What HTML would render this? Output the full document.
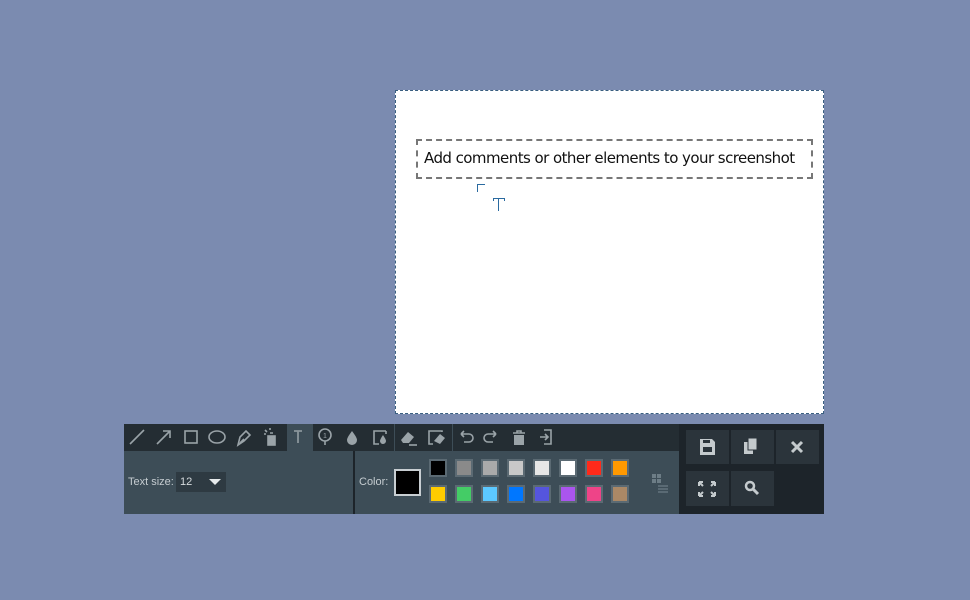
<!DOCTYPE html>
<html><head><style>
body{margin:0;width:970px;height:600px;background:#7b8bb0;position:relative;overflow:hidden;font-family:"Liberation Sans",sans-serif}
.a{position:absolute}
.canvas{left:395px;top:90px;width:427px;height:322px;background:#fff;border:1px dashed #3a5f80}
.tb{left:416px;top:139px;width:387px;height:36px;border:2px dashed #777;font-family:"DejaVu Sans","Liberation Sans",sans-serif;font-size:15px;color:#111;line-height:34px;padding-left:6px;letter-spacing:-0.55px;white-space:nowrap}
.top{left:124px;top:424px;width:555px;height:27px;background:#242d33}
.bot{left:124px;top:451px;width:555px;height:63px;background:#3d4d57}
.right{left:679px;top:424px;width:145px;height:90px;background:#1d242a}
.btn{position:absolute;width:43px;height:34px;background:#2b343b}
.sw{position:absolute;width:14px;height:14px;border:2px solid #5b6a73}
svg{position:absolute}
.lbl{color:#c5ccd0;font-size:11px}
</style></head><body>
<div class="a canvas"></div>
<div class="a tb">Add comments or other elements to your screenshot</div>
<div class="a" style="left:477px;top:184px;width:7px;height:7px;border-left:1px solid #2a6aa0;border-top:1px solid #2a6aa0"></div>
<div class="a" style="left:493px;top:198px;width:12px;height:1px;background:#2a6aa0"></div>
<div class="a" style="left:498px;top:198px;width:1px;height:13px;background:#2a6aa0"></div>
<div class="a" style="left:493px;top:198px;width:1px;height:3px;background:#2a6aa0"></div>
<div class="a" style="left:504px;top:198px;width:1px;height:3px;background:#2a6aa0"></div>

<div class="a top"></div>
<div class="a" style="left:287px;top:424px;width:26px;height:27px;background:#3d4d57"></div>
<div class="a" style="left:394px;top:424px;width:1px;height:27px;background:#3d4d57"></div>
<div class="a" style="left:452px;top:424px;width:1px;height:27px;background:#3d4d57"></div>
<svg class="a" style="left:124px;top:424px" width="440" height="27" fill="none" stroke="#9aa3a8" stroke-width="1.6">
<line x1="6" y1="20" x2="20" y2="6"/>
<line x1="33" y1="20" x2="46" y2="7"/><path d="M39 7h7v7"/>
<rect x="61" y="7" width="12" height="12"/>
<ellipse cx="93" cy="13" rx="8" ry="6"/>
<path d="M114 21l2-8 6-6 4 4-6 6z M116 19l4-4"/>
<rect x="144" y="12" width="7" height="9" fill="#9aa3a8"/><path d="M146 9h3 M141 6l2 2 M146 4v2 M140 10h2"/>
<path d="M170 7h8 M174 7v12" stroke="#8a959b" stroke-width="1.8"/>
<circle cx="201" cy="11" r="6"/><path d="M201 17v4"/><text x="199" y="14" font-size="7" fill="#9aa3a8" stroke="none">1</text>
<path d="M228 7c-3 4-5 7-5 9a5 5 0 0 0 10 0c0-2-2-5-5-9z" fill="#9aa3a8" stroke="none"/>
<path d="M262 7h-12v13h5 M262 7v3"/><path d="M259 11c-2 3-3 5-3 6a3 3 0 0 0 6 0c0-1-1-3-3-6z" fill="#9aa3a8" stroke="none"/>
<path d="M277 16l7-8 6 5-5 6h-6z" fill="#9aa3a8" stroke="none"/><path d="M285 21h8"/>
<path d="M318 8v-1h-13v13h4"/><path d="M310 17l6-7 5 4-5 6z" fill="#9aa3a8" stroke="none"/>
<path d="M337 10h8a4 4 0 0 1 0 8h-5 M337 10l3-3 M337 10l3 3"/>
<path d="M372 10h-8a4 4 0 0 0 0 8h5 M372 10l-3-3 M372 10l-3 3"/>
<path d="M389 9h12 M393 9v-2h4v2" /><rect x="390" y="11" width="10" height="10" fill="#9aa3a8" stroke="none"/>
<path d="M420 6h7v14h-7 M416 13h8 M421 10l3 3-3 3"/>
</svg>

<div class="a bot"></div>
<div class="a" style="left:353px;top:451px;width:2px;height:63px;background:#1d242a"></div>
<div class="a lbl" style="left:128px;top:476px">Text size:</div>
<div class="a" style="left:176px;top:472px;width:50px;height:20px;background:#2e3a42"></div>
<div class="a lbl" style="left:180px;top:476px;color:#d5dadd">12</div>
<svg class="a" style="left:208px;top:478px" width="14" height="8"><path d="M1 1h12l-6 6z" fill="#e6eaec"/></svg>
<div class="a lbl" style="left:359px;top:476px">Color:</div>
<div class="a" style="left:394px;top:469px;width:23px;height:23px;background:#000;border:2px solid #c8ced2"></div>
<div class="sw" style="left:429px;top:459px;background:#000"></div>
<div class="sw" style="left:455px;top:459px;background:#8a8a8a"></div>
<div class="sw" style="left:481px;top:459px;background:#aaa"></div>
<div class="sw" style="left:507px;top:459px;background:#c8c8c8"></div>
<div class="sw" style="left:533px;top:459px;background:#e6e6e6"></div>
<div class="sw" style="left:559px;top:459px;background:#fff"></div>
<div class="sw" style="left:585px;top:459px;background:#ff2a1a"></div>
<div class="sw" style="left:611px;top:459px;background:#ff9900"></div>
<div class="sw" style="left:429px;top:485px;background:#ffcc00"></div>
<div class="sw" style="left:455px;top:485px;background:#44cc66"></div>
<div class="sw" style="left:481px;top:485px;background:#5cc8ff"></div>
<div class="sw" style="left:507px;top:485px;background:#0077ff"></div>
<div class="sw" style="left:533px;top:485px;background:#5555dd"></div>
<div class="sw" style="left:559px;top:485px;background:#aa55ee"></div>
<div class="sw" style="left:585px;top:485px;background:#ee4488"></div>
<div class="sw" style="left:611px;top:485px;background:#aa8866"></div>
<svg class="a" style="left:650px;top:472px" width="20" height="22" fill="#6d7d86"><rect x="2" y="2" width="4" height="4"/><rect x="7" y="2" width="4" height="4"/><rect x="2" y="7" width="4" height="4"/><rect x="7" y="7" width="4" height="4"/><path d="M8 14h10M8 17h10M8 20h10" stroke="#6d7d86" stroke-width="1.2"/></svg>

<div class="a right"></div>
<div class="btn" style="left:686px;top:430px"></div>
<div class="btn" style="left:731px;top:430px"></div>
<div class="btn" style="left:776px;top:430px"></div>
<div class="btn" style="left:686px;top:471px;height:35px"></div>
<div class="btn" style="left:731px;top:471px;height:35px"></div>
<svg class="a" style="left:686px;top:430px" width="133" height="77">
<path d="M14 9h12l3 3v13h-15z" fill="#c4cacd"/><rect x="17" y="17" width="9" height="5" fill="#2b343b"/><rect x="17" y="10" width="7" height="3" fill="#2b343b"/>
<rect x="58" y="12" width="9" height="12" fill="#c4cacd"/><rect x="62" y="8" width="9" height="12" fill="#c4cacd" stroke="#2b343b"/>
<path d="M106 12l10 10M116 12l-10 10" stroke="#c4cacd" stroke-width="3"/>
<path d="M13 52l4 4M13 52v4M13 52h4 M29 52l-4 4M29 52v4M29 52h-4 M13 66l4-4M13 66v-4M13 66h4 M29 66l-4-4M29 66v-4M29 66h-4" stroke="#c4cacd" stroke-width="2" fill="none"/>
<circle cx="64" cy="56" r="4" stroke="#c4cacd" stroke-width="2.5" fill="none"/><path d="M67 59l5 5" stroke="#c4cacd" stroke-width="3"/>
</svg>
</body></html>
